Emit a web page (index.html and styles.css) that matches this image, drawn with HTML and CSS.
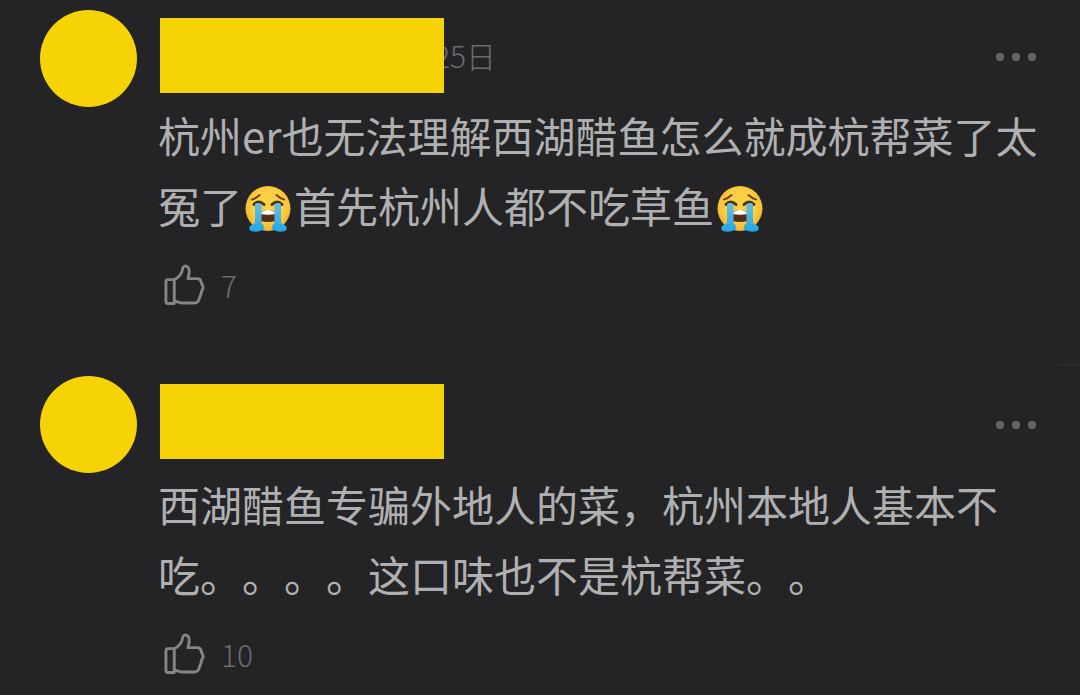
FILE: index.html
```html
<!DOCTYPE html>
<html lang="zh-CN">
<head>
    <meta charset="UTF-8">
    <meta name="viewport" content="width=device-width, initial-scale=1.0">
    <title>评论</title>
    <link rel="stylesheet" href="styles.css">
</head>
<body>
    <!-- Shared icons -->
    <svg class="sprite" aria-hidden="true">
        <defs>
            <linearGradient id="tear" x1="0" y1="0" x2="0" y2="1">
                <stop offset="0" stop-color="#6cc0de"/>
                <stop offset="1" stop-color="#22a7ea"/>
            </linearGradient>
            <radialGradient id="face" cx="0.5" cy="0.45" r="0.6">
                <stop offset="0.6" stop-color="#fbd044"/>
                <stop offset="1" stop-color="#f2a925"/>
            </radialGradient>
        </defs>
        <symbol id="thumb" viewBox="0 0 42 42">
            <path d="M2 17.5Q2 15.5 4 15.5H10.500V40H4Q2 40 2 38ZM10.500 15.500C16 13 18.500 8 19 4.500C19.500 1.500 21.500 1 23.500 2C26.500 3.500 26.500 8 24.500 14.500H34C37 14.500 38 16 38.300 18.500C38.500 20.500 40.500 21.500 40 24C39.800 26 38.500 26.500 38.300 28.500C38 31 37 32 36.500 34C35.500 38 34.500 39.500 31 39.500H20C16 39.500 14 38 10.500 37.500"/>
        </symbol>
        <symbol id="cry" viewBox="0 0 48 48">
            <circle cx="24" cy="23.500" r="22.500" fill="url(#face)"/>
            <path d="M8 14.500Q12 13.500 15.500 10M40 14.500Q36 13.500 32.500 10" fill="none" stroke="#784313" stroke-width="2" stroke-linecap="round"/>
            <path d="M10 19.500Q14.500 14.500 20 19.500M28 19.500Q33.500 14.500 38 19.500" fill="none" stroke="#453512" stroke-width="3" stroke-linecap="round"/>
            <path d="M16 36V30Q17 25 24 25T32 30V36Q24 38 16 36Z" fill="#53301c"/>
            <path d="M16 29Q19 25 24 25T32 29Q24 30.500 16 29Z" fill="#fff"/>
            <path d="M11 19Q14 17 17.500 19V38Q21 41 20 44Q15 48 7 46Q4 44 6 41L11 38ZM30.500 19Q34 17 37 19V38L42 41Q44 44 41 46Q33 48 28 44Q27 41 30.500 38Z" fill="url(#tear)"/>
        </symbol>
    </svg>

    <main class="comments">
        <article class="comment">
            <div class="avatar"></div>
            <div class="comment-body">
                <header class="comment-head">
                    <div class="name-mask"></div>
                    <time class="date">25日</time>
                    <button class="more" type="button" aria-label="更多"><i></i><i></i><i></i></button>
                </header>
                <p class="comment-text">杭州er也无法理解西湖醋鱼怎么就成杭帮菜了太冤了<svg class="emoji" role="img" aria-label="大哭"><use href="#cry"/></svg>首先杭州人都不吃草鱼<svg class="emoji" role="img" aria-label="大哭"><use href="#cry"/></svg></p>
                <button class="like" type="button" aria-label="赞 7">
                    <svg class="like-icon"><use href="#thumb"/></svg>
                    <span>7</span>
                </button>
            </div>
        </article>
        <div class="divider"></div>
        <article class="comment comment-undated">
            <div class="avatar"></div>
            <div class="comment-body">
                <header class="comment-head">
                    <div class="name-mask"></div>
                    <button class="more" type="button" aria-label="更多"><i></i><i></i><i></i></button>
                </header>
                <p class="comment-text">西湖醋鱼专骗外地人的菜，杭州本地人基本不吃。。。。这口味也不是杭帮菜。。</p>
                <button class="like" type="button" aria-label="赞 10">
                    <svg class="like-icon"><use href="#thumb"/></svg>
                    <span>10</span>
                </button>
            </div>
        </article>
    </main>
</body>
</html>
```

FILE: styles.css
```css
* {
    box-sizing: border-box;
}
body {
    margin: 0;
    background-color: #242426;
    color: #b0b0b2;
    font-family: "Noto Sans CJK SC", sans-serif;
}
.sprite {
    position: absolute;
    width: 0;
    height: 0;
}
.comment {
    display: flex;
    gap: 21px;
    padding: 10px 42px 0 40px;
}
.avatar {
    flex: none;
    width: 97px;
    height: 97px;
    border-radius: 50%;
    background-color: #f5d306;
}
.comment-body {
    flex: 1;
    min-width: 0;
}
.comment-head {
    display: flex;
    align-items: center;
    height: 90px;
}
.comment-undated .comment-head {
    height: 93px;
}
.name-mask {
    position: relative;
    z-index: 1;
    align-self: flex-start;
    width: 284px;
    height: 75px;
    margin: 8px 0 0 2px;
    background-color: #f5d306;
}
.date {
    margin-left: -10px;
    color: #6c6c6e;
    font-size: 30px;
    font-weight: 300;
    line-height: 42px;
}
.more {
    display: flex;
    gap: 8px;
    margin-left: auto;
    padding: 4px 2px 0;
    border: none;
    background: none;
    cursor: pointer;
}
.more i {
    width: 8px;
    height: 8px;
    border-radius: 50%;
    background-color: #666668;
}
.comment-text {
    margin: 0;
    font-size: 42px;
    line-height: 70px;
    line-break: anywhere;
    text-spacing-trim: space-all;
}
.emoji {
    width: 48px;
    height: 48px;
    margin: 0 2px;
    vertical-align: -10px;
}
.like {
    display: flex;
    align-items: center;
    gap: 16px;
    margin-top: 24px;
    padding: 0 0 0 6px;
    border: none;
    background: none;
    color: #6c6c6e;
    font-family: inherit;
    font-size: 30px;
    font-weight: 300;
    line-height: 42px;
    cursor: pointer;
}
.like-icon {
    width: 41px;
    height: 42px;
    fill: none;
    stroke: #858587;
    stroke-width: 3;
    stroke-linejoin: round;
    stroke-linecap: round;
}
.divider {
    width: 22px;
    height: 2px;
    margin: 58px 0 0 auto;
    background-color: #2b2b2d;
}
```
